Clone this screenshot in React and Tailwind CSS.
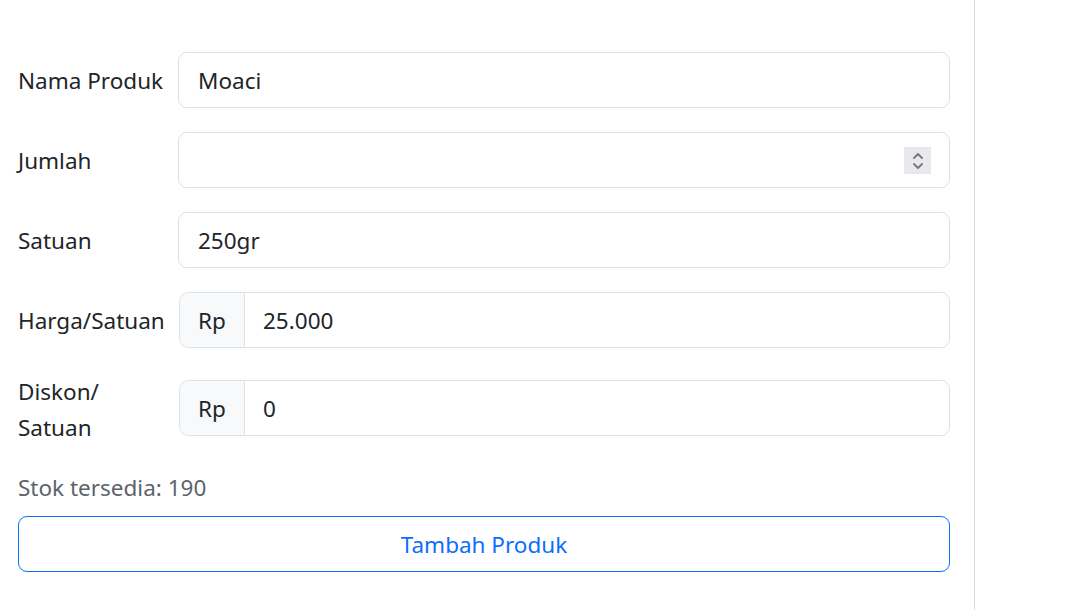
export default function App() {
  const rows = [
    { label: "Nama Produk", value: "Moaci" },
    { label: "Jumlah", value: "", spinner: true },
    { label: "Satuan", value: "250gr" },
  ];
  return (
    <div
      className="flex min-h-[610px] w-[1067px] bg-white text-[#212529]"
      style={{ fontFamily: '"Noto Sans", "Open Sans", sans-serif' }}
    >
      <div className="w-[975px] border-r border-[#dadce0] pl-[18px] pr-[24px] pt-[52px]">
        {rows.map((r) => (
          <div key={r.label} className="mb-[24px] flex items-center">
            <label className="w-[160px] shrink-0 pt-[2px] text-[22.5px] leading-[36px]">{r.label}</label>
            <div className="relative flex h-[56px] flex-1 items-center rounded-[9px] border border-[#dee2e6] px-[19px] pt-[2px] text-[22.5px]">
              {r.value}
              {r.spinner && (
                <div className="absolute right-[18px] top-[14px] flex h-[27px] w-[27px] flex-col items-center justify-center bg-[#e9e9ed]">
                  <svg width="14" height="22" viewBox="0 0 14 22" fill="none" stroke="#7d7a85" strokeWidth="2" strokeLinecap="round" strokeLinejoin="round">
                    <path d="M3 8 L7 4 L11 8" />
                    <path d="M3 14 L7 18 L11 14" />
                  </svg>
                </div>
              )}
            </div>
          </div>
        ))}
        <div className="mb-[24px] flex items-center">
          <label className="w-[160px] shrink-0 pt-[2px] text-[22.5px] leading-[36px]">Harga/Satuan</label>
          <div className="ml-px flex h-[56px] flex-1 rounded-[9px] border border-[#dee2e6] pt-[2px] text-[22.5px]">
            <span className="-mt-[2px] flex w-[65px] items-center justify-center rounded-l-[9px] border-r border-[#dee2e6] bg-[#f8f9fa] pt-[2px]">Rp</span>
            <span className="flex items-center pl-[18px]">25.000</span>
          </div>
        </div>
        <div className="mb-[24px] flex items-center">
          <label className="relative top-[2px] w-[160px] shrink-0 text-[22.5px] leading-[36px]">
            Diskon/
            <br />
            Satuan
          </label>
          <div className="ml-px flex h-[56px] flex-1 rounded-[9px] border border-[#dee2e6] pt-[2px] text-[22.5px]">
            <span className="-mt-[2px] flex w-[65px] items-center justify-center rounded-l-[9px] border-r border-[#dee2e6] bg-[#f8f9fa] pt-[2px]">Rp</span>
            <span className="flex items-center pl-[18px]">0</span>
          </div>
        </div>
        <p className="relative top-[2px] mb-[12px] text-[22.5px] leading-[36px] text-[#5c636a]">Stok tersedia: 190</p>
        <button className="flex h-[56px] w-full items-center justify-center rounded-[9px] border border-[#0d6efd] pt-[2px] text-[22.5px] text-[#0d6efd]">
          Tambah Produk
        </button>
      </div>
      <div className="flex-1" />
    </div>
  );
}
